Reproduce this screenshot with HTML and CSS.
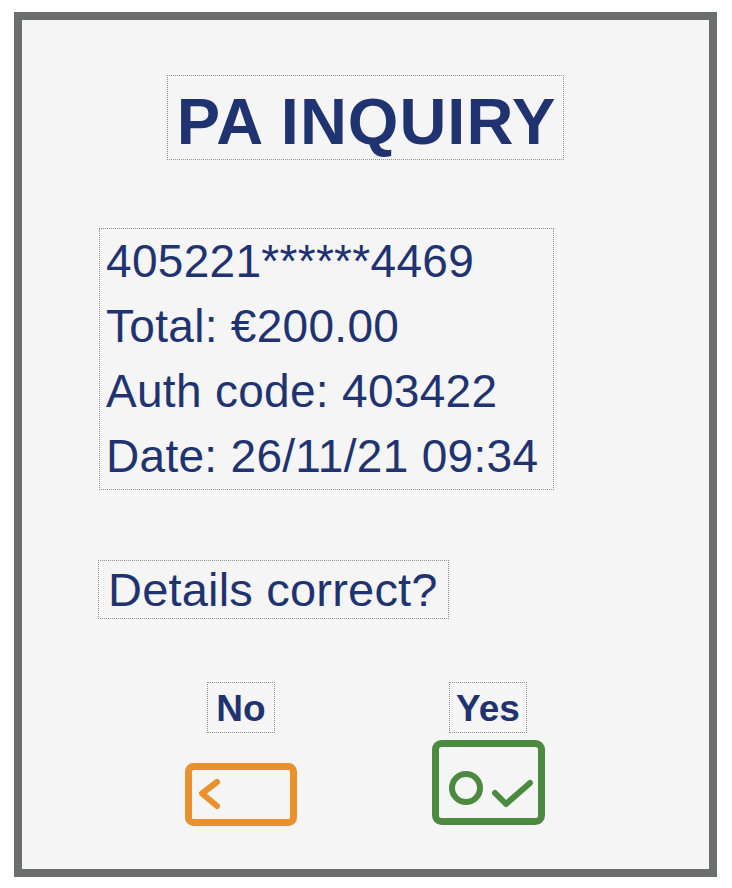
FILE: index.html
```html
<!DOCTYPE html>
<html lang="en">
<head>
    <meta charset="UTF-8">
    <meta name="viewport" content="width=device-width, initial-scale=1.0">
    <title>PA Inquiry</title>
    <link rel="stylesheet" href="styles.css">
</head>
<body>

    <div class="screen">
        <h1 class="title box">PA INQUIRY</h1>

        <div class="details box">
            <div>405221******4469</div>
            <div>Total: €200.00</div>
            <div>Auth code: 403422</div>
            <div>Date: 26/11/21 09:34</div>
        </div>

        <div class="question box">Details correct?</div>

        <div class="choices">
            <div class="choice">
                <span class="label label-no box">No</span>
                <svg class="key key-no" width="112" height="63" viewBox="0 0 112 63">
                    <rect x="3.5" y="3.5" width="105" height="56" rx="5" fill="none" stroke="#e8912d" stroke-width="7"/>
                    <polyline points="32,19 17,30.5 32,43" fill="none" stroke="#e8912d" stroke-width="6" stroke-linecap="round" stroke-linejoin="round"/>
                </svg>
            </div>
            <div class="choice">
                <span class="label label-yes box">Yes</span>
                <svg class="key key-yes" width="113" height="85" viewBox="0 0 113 85">
                    <rect x="3.5" y="3.5" width="106" height="78" rx="6" fill="none" stroke="#4b8a3f" stroke-width="7"/>
                    <circle cx="34" cy="48" r="14" fill="none" stroke="#4b8a3f" stroke-width="6"/>
                    <polyline points="63,53 74,64 98,43" fill="none" stroke="#4b8a3f" stroke-width="6" stroke-linecap="round" stroke-linejoin="round"/>
                </svg>
            </div>
        </div>
    </div>

</body>
</html>
```

FILE: styles.css
```css
body {
    font-family: 'Liberation Sans', Arial, sans-serif;
    background-color: #ffffff;
    color: #1f3371;
    margin: 0;
    padding: 12px 0 0 14px;
}
.screen {
    box-sizing: border-box;
    width: 703px;
    height: 865px;
    border: 8px solid #6b6e6c;
    background-color: #f5f5f6;
    display: flex;
    flex-direction: column;
    align-items: flex-start;
}
.box {
    border: 1px dotted #8f8f8f;
}
.title {
    align-self: center;
    margin: 55px 0 0 0;
    padding: 8px 7px 0 9px;
    font-size: 65px;
    line-height: 75px;
    font-weight: bold;
    letter-spacing: 1px;
}
.details {
    margin: 68px 0 0 77px;
    padding: 0 15px 0 6px;
    font-size: 46px;
    line-height: 65px;
    letter-spacing: 0.3px;
}
.question {
    margin: 70px 0 0 76px;
    padding: 0 10px 0 9px;
    font-size: 47px;
    line-height: 57px;
    letter-spacing: 0.2px;
}
.choices {
    display: flex;
    gap: 107px;
    margin: 63px 0 0 149px;
}
.choice {
    width: 140px;
    display: flex;
    flex-direction: column;
    align-items: center;
}
.label {
    font-size: 37px;
    font-weight: bold;
    line-height: 47px;
    padding: 2px 8px 0 8px;
}
.label-yes {
    padding: 2px 6px 0 6px;
}
.key {
    display: block;
}
.key-no {
    margin-top: 30px;
}
.key-yes {
    margin-top: 7px;
}
```
